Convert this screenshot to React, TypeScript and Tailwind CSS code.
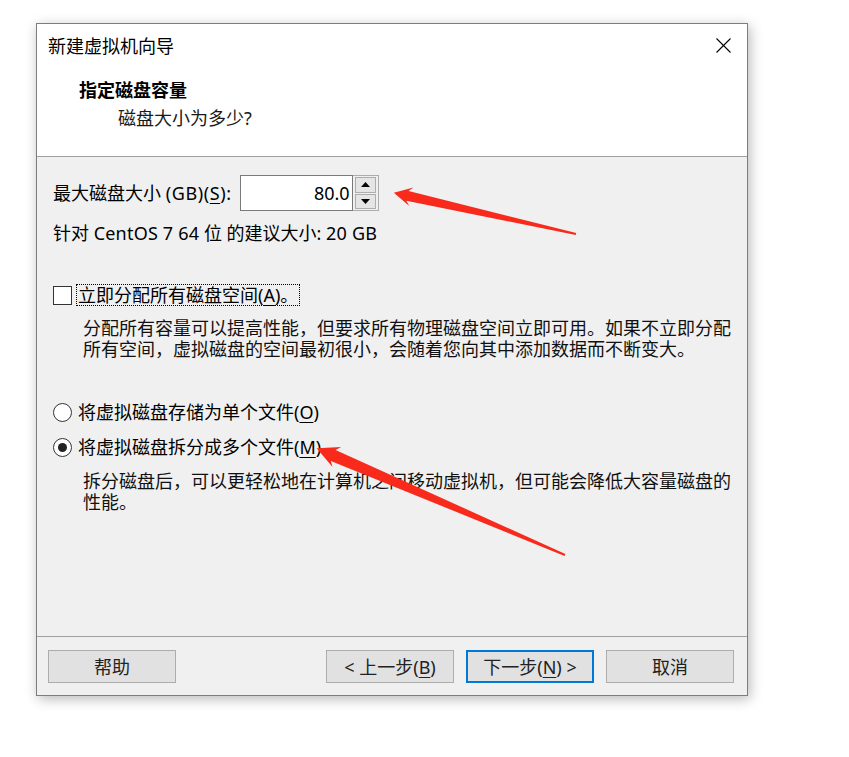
import React from "react";

const U = ({ c }: { c: string }) => (
  <span className="underline underline-offset-[3px] decoration-1">{c}</span>
);

function Arrow({
  x,
  y,
  len,
  angle,
  head,
  half,
  shaft,
}: {
  x: number;
  y: number;
  len: number;
  angle: number;
  head: number;
  half: number;
  shaft: number;
}) {
  const L = len;
  const pts = [
    [0, -1],
    [L - head + 4, -shaft],
    [L - head, -half],
    [L, 0],
    [L - head, half],
    [L - head + 4, shaft],
    [0, 1],
  ]
    .map((p) => p.join(","))
    .join(" ");
  return (
    <g transform={`translate(${x} ${y}) rotate(${angle})`}>
      <polygon points={pts} fill="#f82a1c" />
    </g>
  );
}

export default function App() {
  return (
    <div className="relative min-h-screen w-full bg-white text-black font-[family-name:'Noto_Sans','Noto_Sans_CJK_SC',sans-serif] text-[18px] leading-[24px]">
      <div className="pt-[23px] pl-[36px]">
        <div className="flex h-[673px] w-[712px] flex-col border border-[#7d7d7d] bg-[#f0f0f0] shadow-[2px_3px_12px_rgba(0,0,0,0.28)]">
          {/* Header */}
          <div className="h-[133px] shrink-0 border-b border-[#a0a0a0] bg-white">
            <div className="flex h-[24px] items-center justify-between pl-[11px] pr-[16px] mt-[10px]">
              <span className="text-[18px] leading-[24px]">新建虚拟机向导</span>
              <svg width="15" height="15" viewBox="0 0 15 15" className="mt-[-1px]">
                <line x1="0.5" y1="0.5" x2="14.5" y2="14.5" stroke="#000" strokeWidth="1.1" />
                <line x1="14.5" y1="0.5" x2="0.5" y2="14.5" stroke="#000" strokeWidth="1.1" />
              </svg>
            </div>
            <div className="mt-[20px] pl-[42px] font-bold text-[18px] leading-[24px]">
              指定磁盘容量
            </div>
            <div className="mt-[4px] pl-[81px] text-[18px] leading-[24px] text-[#1a1a1a]">
              磁盘大小为多少?
            </div>
          </div>

          {/* Body */}
          <div className="flex-1 pl-[16px] pt-[18px]">
            <div className="flex h-[36px] items-center gap-[8px]">
              <span className="whitespace-nowrap">
                最大磁盘大小 <span className="tracking-[0.6px]">(GB)(<U c="S" />):</span>
              </span>
              <div className="flex h-[36px]">
                <div className="flex h-[36px] w-[113px] items-center justify-end border border-[#7a7a7a] bg-white pr-[2px]">
                  80.0
                </div>
                <div className="flex h-[36px] w-[26px] flex-col gap-[1px] border border-l-0 border-[#adadad] bg-[#f0f0f0] px-[2px] py-[1px]">
                  <div className="flex flex-1 items-center justify-center border border-[#adadad] bg-[#e5e5e5]">
                    <svg width="9" height="5" viewBox="0 0 9 5">
                      <polygon points="4.5,0 9,5 0,5" fill="#000" />
                    </svg>
                  </div>
                  <div className="flex flex-1 items-center justify-center border border-[#adadad] bg-[#e5e5e5]">
                    <svg width="9" height="5" viewBox="0 0 9 5">
                      <polygon points="0,0 9,0 4.5,5" fill="#000" />
                    </svg>
                  </div>
                </div>
              </div>
            </div>
            <div className="mt-[10px] whitespace-nowrap">
              针对 <span className="tracking-[0.2px]">CentOS 7 64</span> 位 的建议大小:{" "}
              <span className="tracking-[0.2px]">20 GB</span>
            </div>

            {/* Checkbox */}
            <div className="mt-[39px] flex h-[22px] items-center">
              <div className="h-[19px] w-[19px] border border-[#333] bg-white" />
              <div className="ml-[4px] flex h-[22px] items-center border border-dotted border-black px-[1px] leading-[20px] whitespace-nowrap">
                立即分配所有磁盘空间(<U c="A" />)。
              </div>
            </div>
            <div className="mt-[12px] pl-[30px] leading-[21px] whitespace-nowrap text-[#111]">
              分配所有容量可以提高性能，但要求所有物理磁盘空间立即可用。如果不立即分配
              <br />
              所有空间，虚拟磁盘的空间最初很小，会随着您向其中添加数据而不断变大。
            </div>

            {/* Radios */}
            <div className="mt-[41px] flex h-[22px] items-center">
              <div className="h-[19px] w-[19px] rounded-full border border-[#333] bg-white" />
              <span className="ml-[6px] whitespace-nowrap leading-[22px]">
                将虚拟磁盘存储为单个文件(<U c="O" />)
              </span>
            </div>
            <div className="mt-[13px] flex h-[22px] items-center">
              <div className="flex h-[19px] w-[19px] items-center justify-center rounded-full border border-[#333] bg-white">
                <div className="h-[9px] w-[9px] rounded-full bg-[#222]" />
              </div>
              <span className="ml-[6px] whitespace-nowrap leading-[22px]">
                将虚拟磁盘拆分成多个文件(<U c="M" />)
              </span>
            </div>
            <div className="mt-[13px] pl-[30px] leading-[21px] whitespace-nowrap text-[#111]">
              拆分磁盘后，可以更轻松地在计算机之间移动虚拟机，但可能会降低大容量磁盘的
              <br />
              性能。
            </div>
          </div>

          {/* Footer */}
          <div className="flex h-[59px] shrink-0 items-start border-t border-[#a0a0a0] pl-[11px] pr-[13px] pt-[13px]">
            <button className="flex h-[33px] w-[128px] items-center justify-center border border-[#adadad] bg-[#e1e1e1] text-[#222]">
              帮助
            </button>
            <div className="flex-1" />
            <button className="flex h-[33px] w-[128px] items-center justify-center border border-[#adadad] bg-[#e1e1e1] text-[#222]">
              &lt; 上一步(<U c="B" />)
            </button>
            <button className="ml-[12px] flex h-[33px] w-[128px] items-center justify-center border-2 border-[#0078d7] bg-[#e1e1e1] text-[#222]">
              下一步(<U c="N" />) &gt;
            </button>
            <button className="ml-[12px] flex h-[33px] w-[128px] items-center justify-center border border-[#adadad] bg-[#e1e1e1] text-[#222]">
              取消
            </button>
          </div>
        </div>
      </div>

      {/* Annotation arrows overlay */}
      <svg
        className="pointer-events-none absolute left-0 top-0"
        width="849"
        height="757"
        viewBox="0 0 849 757"
      >
        <Arrow x={576} y={234} len={186.8} angle={192.76} head={18} half={9.5} shaft={5} />
        <Arrow x={565} y={555} len={270.3} angle={203.25} head={22} half={11} shaft={6} />
      </svg>
    </div>
  );
}
